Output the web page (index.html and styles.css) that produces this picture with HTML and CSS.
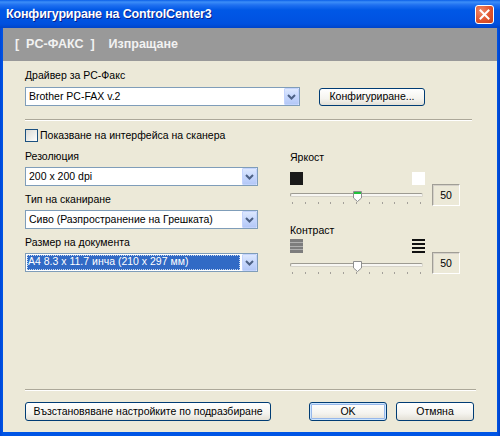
FILE: index.html
```html
<!DOCTYPE html>
<html lang="bg">
<head>
<meta charset="utf-8">
<title>Конфигуриране на ControlCenter3</title>
<link rel="stylesheet" href="styles.css">
</head>
<body>
<div class="window">
  <div class="titlebar">
    <span class="title">Конфигуриране на ControlCenter3</span>
    <span class="close">
      <svg width="19" height="19" viewBox="0 0 19 19"><path d="M5.5 5.5 L13.5 13.5 M13.5 5.5 L5.5 13.5" stroke="#fff" stroke-width="2" stroke-linecap="square"/></svg>
    </span>
  </div>
  <div class="frame">
    <div class="banner">[  PC-ФАКС  ]    Изпращане</div>
    <div class="content">
      <div class="label">Драйвер за PC-Факс</div>
      <div class="driver-row">
        <div class="combo combo-wide"><span class="combo-text">Brother PC-FAX v.2</span><span class="drop"><svg width="15" height="17" viewBox="0 0 15 17"><path d="M4 7 L7.5 10.5 L11 7" fill="none" stroke="#4D6185" stroke-width="2"/></svg></span></div>
        <button class="btn btn-cfg">Конфигуриране...</button>
      </div>
      <div class="sep sep-top"></div>
      <div class="check"><span class="box"></span><span>Показване на интерфейса на сканера</span></div>
      <div class="columns">
        <div class="left">
          <div class="label">Резолюция</div>
          <div class="combo"><span class="combo-text">200 x 200 dpi</span><span class="drop"><svg width="15" height="17" viewBox="0 0 15 17"><path d="M4 7 L7.5 10.5 L11 7" fill="none" stroke="#4D6185" stroke-width="2"/></svg></span></div>
          <div class="label">Тип на сканиране</div>
          <div class="combo"><span class="combo-text">Сиво (Разпространение на Грешката)</span><span class="drop"><svg width="15" height="17" viewBox="0 0 15 17"><path d="M4 7 L7.5 10.5 L11 7" fill="none" stroke="#4D6185" stroke-width="2"/></svg></span></div>
          <div class="label">Размер на документа</div>
          <div class="combo"><span class="combo-sel">A4 8.3 x 11.7 инча (210 x 297 мм)</span><span class="drop"><svg width="15" height="17" viewBox="0 0 15 17"><path d="M4 7 L7.5 10.5 L11 7" fill="none" stroke="#4D6185" stroke-width="2"/></svg></span></div>
        </div>
        <div class="right">
          <div class="label rlabel-bright">Яркост</div>
          <div class="slider-row row-bright">
            <div class="slider-block">
              <div class="icons">
                <span class="sq sq-black"></span>
                <span class="sq sq-white"></span>
              </div>
              <div class="slider slider-bright">
                <div class="track"><span class="thumb"><svg width="9" height="11" viewBox="0 0 9 11"><path d="M0.5 0.5 H8.5 V7 L4.5 10.5 L0.5 7 Z" fill="#fff" stroke="#8E8F8F"/><rect x="1" y="1" width="7" height="2" fill="#21C13B"/></svg></span></div>
                <div class="ticks"><i></i><i></i><i></i><i></i><i></i><i></i><i></i><i></i><i></i><i></i><i></i></div>
              </div>
            </div>
            <div class="value val-bright">50</div>
          </div>
          <div class="label rlabel-contrast">Контраст</div>
          <div class="slider-row row-contrast">
            <div class="slider-block">
              <div class="icons">
                <svg class="stripe" width="13" height="14" viewBox="0 0 13 14"><rect x="0" y="0" width="13" height="14" fill="#7d7d7d"/><rect x="0" y="3" width="13" height="1" fill="#b0b0b0"/><rect x="0" y="7" width="13" height="1" fill="#b0b0b0"/><rect x="0" y="10" width="13" height="1" fill="#b0b0b0"/></svg>
                <svg class="stripe" width="13" height="14" viewBox="0 0 13 14"><rect x="0" y="0" width="13" height="2" fill="#111"/><rect x="0" y="4" width="13" height="2" fill="#111"/><rect x="0" y="8" width="13" height="2" fill="#111"/><rect x="0" y="12" width="13" height="2" fill="#111"/></svg>
              </div>
              <div class="slider slider-contrast">
                <div class="track"><span class="thumb"><svg width="9" height="11" viewBox="0 0 9 11"><path d="M0.5 0.5 H8.5 V7 L4.5 10.5 L0.5 7 Z" fill="#fff" stroke="#8E8F8F"/></svg></span></div>
                <div class="ticks"><i></i><i></i><i></i><i></i><i></i><i></i><i></i><i></i><i></i><i></i><i></i></div>
              </div>
            </div>
            <div class="value val-contrast">50</div>
          </div>
        </div>
      </div>
      <div class="spacer"></div>
      <div class="sep sep-bottom"></div>
      <div class="buttons">
        <button class="btn btn-reset">Възстановяване настройките по подразбиране</button>
        <div class="btn-group">
          <button class="btn btn-ok btn-default">OK</button>
          <button class="btn btn-ok">Отмяна</button>
        </div>
      </div>
    </div>
  </div>
</div>
</body>
</html>
```
FILE: styles.css
```css
html, body {
  margin: 0;
  padding: 0;
  background: #fff;
}

body {
  font-family: "Liberation Sans", Arial, sans-serif;
  font-size: 10.5px;
  color: #000;
}

.window {
  width: 500px;
  height: 436px;
  display: flex;
  flex-direction: column;
  background: linear-gradient(90deg, #0046D8 0px, #0055E5 3px, #0055E5 497px, #0040C8 500px);
  overflow: hidden;
}

.titlebar {
  height: 28px;
  flex: none;
  display: flex;
  align-items: center;
  justify-content: space-between;
  padding: 0 6px 1px 6px;
  box-sizing: border-box;
  background: linear-gradient(180deg, #0A5FE8 0px, #3C8EF8 2px, #1F70F0 5px, #0058E6 10px, #0054E3 18px, #0050DE 24px, #0044C8 28px);
}

.title {
  color: #fff;
  font-weight: bold;
  font-size: 12.5px;
  letter-spacing: -0.15px;
  text-shadow: 1px 1px 0 #0A1E8A;
}

.close {
  width: 19px;
  height: 19px;
  box-sizing: border-box;
  border: 1px solid #fff;
  border-radius: 3px;
  background: radial-gradient(circle at 30% 30%, #F08A6A 0%, #E0542E 55%, #C6411E 100%);
  display: flex;
  margin-top: 1px;
}

.close svg {
  margin: -1px;
}

.frame {
  flex: 1;
  display: flex;
  flex-direction: column;
  margin: 0 3px 4px 3px;
  background: #ECE9D8;
}

.banner {
  height: 33px;
  flex: none;
  background: #999999;
  color: #F2F2F2;
  font-weight: bold;
  font-size: 12.5px;
  white-space: pre;
  display: flex;
  align-items: center;
  padding-left: 12px;
  padding-bottom: 1px;
  box-sizing: border-box;
}

.content {
  flex: 1;
  display: flex;
  flex-direction: column;
  padding: 7px 23px 11px 22px;
}

.label {
  height: 14px;
  line-height: 14px;
}

.driver-row {
  display: flex;
  align-items: center;
  margin-top: 5px;
}

.combo {
  height: 19px;
  box-sizing: border-box;
  border: 1px solid #7F9DB9;
  background: #fff;
  display: flex;
  align-items: stretch;
}

.combo-wide {
  width: 275px;
}

.combo-text {
  flex: 1;
  padding-left: 3px;
  line-height: 17px;
  white-space: nowrap;
  overflow: hidden;
}

.combo-sel {
  flex: 1;
  margin: 1px 2px 1px 1px;
  padding-left: 1px;
  line-height: 13px;
  background: #316AC5;
  color: #fff;
  outline: 1px dotted #C8D8F0;
  outline-offset: -1px;
  white-space: nowrap;
  overflow: hidden;
}

.drop {
  width: 15px;
  flex: none;
  box-sizing: border-box;
  border: 1px solid #C3D3FD;
  border-radius: 1px;
  background: linear-gradient(180deg, #DDE8FE 0%, #C6D7FC 50%, #B4C8F7 100%);
  display: flex;
}

.drop svg {
  margin: -1px;
}

.btn {
  height: 19px;
  box-sizing: border-box;
  border: 1px solid #003C74;
  border-radius: 3px;
  background: linear-gradient(180deg, #FFFFFF 0%, #F5F4EF 60%, #E3E0D6 100%);
  font-family: "Liberation Sans", Arial, sans-serif;
  font-size: 10.5px;
  color: #000;
  padding: 0;
  line-height: 15px;
}

.btn-cfg {
  width: 106px;
  margin-left: 19px;
  height: 18px;
}

.sep {
  height: 0;
  border-top: 1px solid #ACA899;
  border-bottom: 1px solid #fff;
}

.sep-top {
  margin-top: 13px;
  margin-right: 2px;
}

.sep-bottom {
  margin-right: -2px;
}

.check {
  display: flex;
  align-items: center;
  height: 13px;
  margin-top: 8px;
  line-height: 13px;
}

.box {
  width: 13px;
  height: 13px;
  box-sizing: border-box;
  border: 1px solid #1C5180;
  background: linear-gradient(135deg, #DCDCD7 0%, #F0F0EC 60%, #FFFFFF 100%);
  margin-right: 2px;
}

.columns {
  display: flex;
  margin-top: 7px;
}

.left {
  width: 233px;
  display: flex;
  flex-direction: column;
}

.left .label {
  margin-bottom: 4px;
}

.left .combo {
  margin-bottom: 6px;
}

.right {
  margin-left: 32px;
  display: flex;
  flex-direction: column;
}

.rlabel-bright {
  margin-top: 1px;
}

.rlabel-contrast {
  margin-top: 16px;
}

.slider-row {
  display: flex;
  align-items: flex-end;
}

.row-bright {
  margin-top: 8px;
}

.row-contrast {
  margin-top: 2px;
}

.slider-block {
  width: 135px;
  display: flex;
  flex-direction: column;
}

.icons {
  display: flex;
  justify-content: space-between;
  height: 14px;
}

.sq {
  width: 13px;
  height: 13px;
}

.sq-black {
  background: #1A1A1A;
}

.sq-white {
  background: #FFFFFF;
}

.slider {
  height: 20px;
  width: 133px;
}

.slider-bright {
  margin-top: 1px;
}

.slider-contrast {
  margin-top: 4px;
}

.track {
  position: relative;
  margin-top: 6px;
  height: 4px;
  box-sizing: border-box;
  border: 1px solid #D6D3C9;
  border-top-color: #9D9B92;
  border-left-color: #9D9B92;
  border-radius: 2px;
  background: #F7F6F2;
}

.thumb {
  position: absolute;
  left: 62px;
  top: -3px;
  width: 9px;
  height: 11px;
  display: flex;
}

.ticks {
  display: flex;
  justify-content: space-between;
  padding: 0 2px;
  margin-top: 5px;
}

.ticks i {
  display: block;
  width: 1px;
  height: 2px;
  background: #A3A09A;
}

.value {
  width: 28px;
  height: 22px;
  box-sizing: border-box;
  margin-left: 7px;
  border: 1px solid #FFFFFF;
  border-top-color: #A09E96;
  border-left-color: #A09E96;
  box-shadow: inset 1px 1px 0 #D4D0C8;
  display: flex;
  align-items: center;
  justify-content: center;
}

.val-bright {
  margin-bottom: 1px;
}

.val-contrast {
  margin-bottom: 3px;
}

.spacer {
  flex: 1;
}

.buttons {
  display: flex;
  justify-content: space-between;
  margin-top: 11px;
}

.btn-reset {
  width: 246px;
}

.btn-group {
  display: flex;
  gap: 9px;
}

.btn-ok {
  width: 78px;
}

.btn-default {
  box-shadow: inset 0 0 0 1px #CEE7FF, inset 0 0 0 2px #98B8EA;
}
```
